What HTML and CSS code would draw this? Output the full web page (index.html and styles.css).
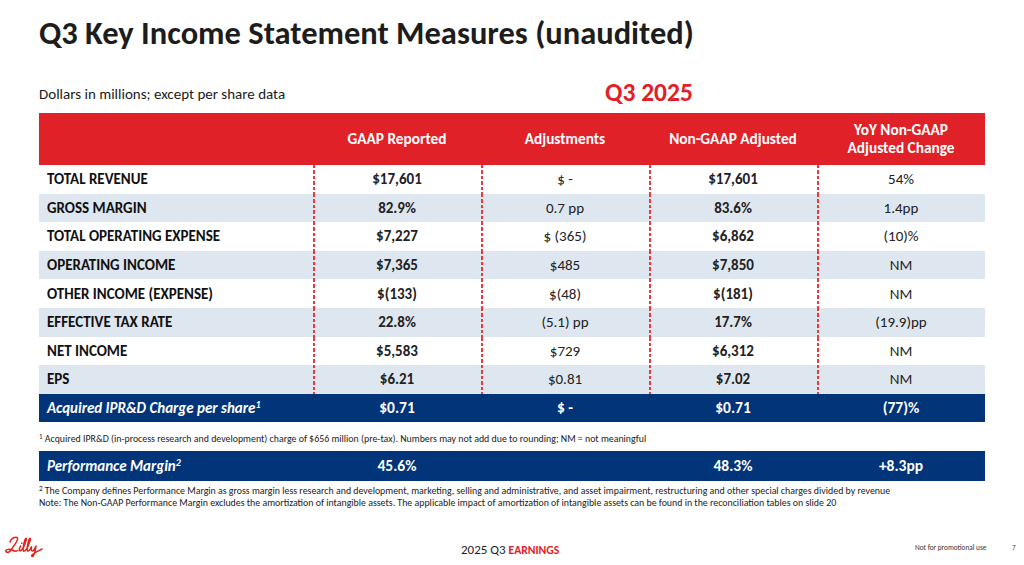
FILE: index.html
```html
<!DOCTYPE html>
<html lang="en">
<head>
<meta charset="utf-8">
<title>Q3 Key Income Statement Measures</title>
<link rel="stylesheet" href="styles.css">
</head>
<body>
<div class="slide">
  <h1 class="title">Q3 Key Income Statement Measures (unaudited)</h1>
  <div class="subhead">
    <div class="units">Dollars in millions; except per share data</div>
    <div class="period">Q3 2025</div>
  </div>
  <table class="measures">
    <colgroup>
      <col class="c-label"><col class="c-val"><col class="c-val"><col class="c-val"><col class="c-val">
    </colgroup>
    <thead>
      <tr class="head">
        <th></th>
        <th>GAAP Reported</th>
        <th>Adjustments</th>
        <th>Non-GAAP Adjusted</th>
        <th>YoY Non-GAAP<br>Adjusted Change</th>
      </tr>
    </thead>
    <tbody>
      <tr><td class="lbl">TOTAL REVENUE</td><td class="b">$17,601</td><td>$ -</td><td class="b">$17,601</td><td>54%</td></tr>
      <tr class="alt"><td class="lbl">GROSS MARGIN</td><td class="b">82.9%</td><td>0.7 pp</td><td class="b">83.6%</td><td>1.4pp</td></tr>
      <tr><td class="lbl">TOTAL OPERATING EXPENSE</td><td class="b">$7,227</td><td>$ (365)</td><td class="b">$6,862</td><td>(10)%</td></tr>
      <tr class="alt"><td class="lbl">OPERATING INCOME</td><td class="b">$7,365</td><td>$485</td><td class="b">$7,850</td><td>NM</td></tr>
      <tr><td class="lbl">OTHER INCOME (EXPENSE)</td><td class="b">$(133)</td><td>$(48)</td><td class="b">$(181)</td><td>NM</td></tr>
      <tr class="alt"><td class="lbl">EFFECTIVE TAX RATE</td><td class="b">22.8%</td><td>(5.1) pp</td><td class="b">17.7%</td><td>(19.9)pp</td></tr>
      <tr><td class="lbl">NET INCOME</td><td class="b">$5,583</td><td>$729</td><td class="b">$6,312</td><td>NM</td></tr>
      <tr class="alt"><td class="lbl">EPS</td><td class="b">$6.21</td><td>$0.81</td><td class="b">$7.02</td><td>NM</td></tr>
      <tr class="navy"><td class="lbl">Acquired IPR&amp;D Charge per share<sup>1</sup></td><td>$0.71</td><td>$ -</td><td>$0.71</td><td>(77)%</td></tr>
    </tbody>
  </table>
  <p class="note note-1"><sup>1</sup> Acquired IPR&amp;D (in-process research and development) charge of $656 million (pre-tax). Numbers may not add due to rounding; NM = not meaningful</p>
  <table class="measures perf">
    <colgroup>
      <col class="c-label"><col class="c-val"><col class="c-val"><col class="c-val"><col class="c-val">
    </colgroup>
    <tbody>
      <tr class="navy"><td class="lbl">Performance Margin<sup>2</sup></td><td>45.6%</td><td></td><td>48.3%</td><td>+8.3pp</td></tr>
    </tbody>
  </table>
  <p class="note note-2"><sup>2</sup> The Company defines Performance Margin as gross margin less research and development, marketing, selling and administrative, and asset impairment, restructuring and other special charges divided by revenue<br>Note: The Non-GAAP Performance Margin excludes the amortization of intangible assets. The applicable impact of amortization of intangible assets can be found in the reconciliation tables on slide 20</p>
  <footer class="footer">
    <svg class="logo" viewBox="0 0 40 24" width="40" height="24" aria-label="Lilly">
      <g fill="none" stroke="#e2231a" stroke-width="1.5" stroke-linecap="round" stroke-linejoin="round">
        <path d="M6 8 C7 4 12 2 13.5 4 C15 6 10 11 7 16 C5.5 18.5 3 19 2 17.5 C1 16 4 14.5 8 16 C10 17 12 18 14 16.5"/>
        <path d="M16.5 12 C15.5 14 15 16 16 17 C17 17 18 15.5 19 14.5"/>
        <path d="M17.6 9.2 L17.9 9.4"/>
        <path d="M19 14.5 C20 12 22 8 22.5 5 C22.5 3.5 21 4.5 20.5 7 C19.5 11 18.5 15 19.5 17 C20.5 17.5 22 16 23 14.5"/>
        <path d="M23 14.5 C24 12 26 8 26.5 5 C26.5 3.5 25 4.5 24.5 7 C23.5 11 22.5 15 23.5 17 C24.5 17.5 26 16 27.5 13"/>
        <path d="M27.5 13 C27 15 27 17 28.5 17 C30 17 31 14 32 12 C31.5 15.5 31 19 29.5 21.5 C28.5 23 27 22.5 28 21 C29.5 19 33 17.5 38 15"/>
      </g>
    </svg>
    <div class="event">2025 Q3 <span class="earn">EARNINGS</span></div>
    <div class="legal">Not for promotional use</div>
    <div class="pageno">7</div>
  </footer>
</div>
</body>
</html>
```
FILE: styles.css
```css
* { box-sizing: border-box; }
html, body { margin: 0; padding: 0; background: #fff; }
body {
  width: 1024px;
  height: 565px;
  overflow: hidden;
  font-family: Carlito, Lato, "Liberation Sans", sans-serif;
  color: #1a1a1a;
}
.slide {
  position: relative;
  width: 1024px;
  height: 565px;
  padding: 0 39px;
}
.title {
  margin: 0;
  padding-top: 14px;
  font-size: 32.5px;
  line-height: 38px;
  font-weight: 700;
  color: #1d1d1d;
}
.subhead {
  display: flex;
  align-items: center;
  height: 28px;
  margin: 27px 0 6px;
}
.units {
  width: 566px;
  font-size: 15px;
  line-height: 18px;
  padding-top: 1px;
}
.period {
  font-size: 25.5px;
  line-height: 28px;
  font-weight: 700;
  color: #e02127;
}
.measures {
  width: 946px;
  border-collapse: collapse;
  table-layout: fixed;
}
.c-label { width: 274px; }
.c-val { width: 168px; }
.measures th {
  height: 52px;
  background: #e02127;
  color: #fff;
  font-weight: 700;
  font-size: 15.3px;
  line-height: 18px;
  text-align: center;
  padding: 0;
}
.measures td {
  height: 28.6px;
  padding: 0;
  text-align: center;
  vertical-align: middle;
  font-size: 15px;
  line-height: 18px;
  color: #222;
  background: #fff;
}
.measures tbody tr td + td {
  background:
    repeating-linear-gradient(to bottom, #e8393f 0 3.5px, transparent 3.5px 5.5px) left top / 2px 100% no-repeat,
    #fff;
}
.measures tbody tr.alt td { background: #dee6ef; }
.measures tbody tr.alt td + td {
  background:
    repeating-linear-gradient(to bottom, #e8393f 0 3.5px, transparent 3.5px 5.5px) left top / 2px 100% no-repeat,
    #dee6ef;
}
.measures td.lbl {
  text-align: left;
  padding-left: 8px;
  font-weight: 700;
  font-size: 15px;
  color: #111;
}
.measures td.b { font-weight: 700; }
.measures tbody tr.navy td,
.measures tbody tr.navy td + td {
  background: #013478;
  color: #fff;
  font-weight: 700;
  font-size: 15.5px;
}
.measures tr.navy td.lbl {
  font-style: italic;
  font-size: 15px;
  padding-left: 8px;
}
.measures sup { font-size: 10px; line-height: 0; vertical-align: 5px; }
.perf td { height: 30px; }
.note {
  margin: 0;
  font-size: 9.9px;
  line-height: 12px;
  color: #222;
}
.note sup { font-size: 7px; vertical-align: 3px; line-height: 0; }
.note-1 { padding: 11px 0 6px; }
.note-2 { padding-top: 4px; }
.footer {
  position: absolute;
  left: 0;
  right: 0;
  bottom: 0;
  height: 34px;
}
.logo { position: absolute; left: 4px; top: 3px; }
.event {
  position: absolute;
  left: 461px;
  top: 11px;
  font-size: 13px;
  color: #222;
}
.earn { color: #e02127; font-weight: 700; font-size: 11.7px; }
.legal {
  position: absolute;
  left: 915px;
  top: 12px;
  font-size: 7.3px;
  color: #333;
}
.pageno {
  position: absolute;
  left: 1012px;
  top: 12px;
  font-size: 7.3px;
  color: #333;
}
```
